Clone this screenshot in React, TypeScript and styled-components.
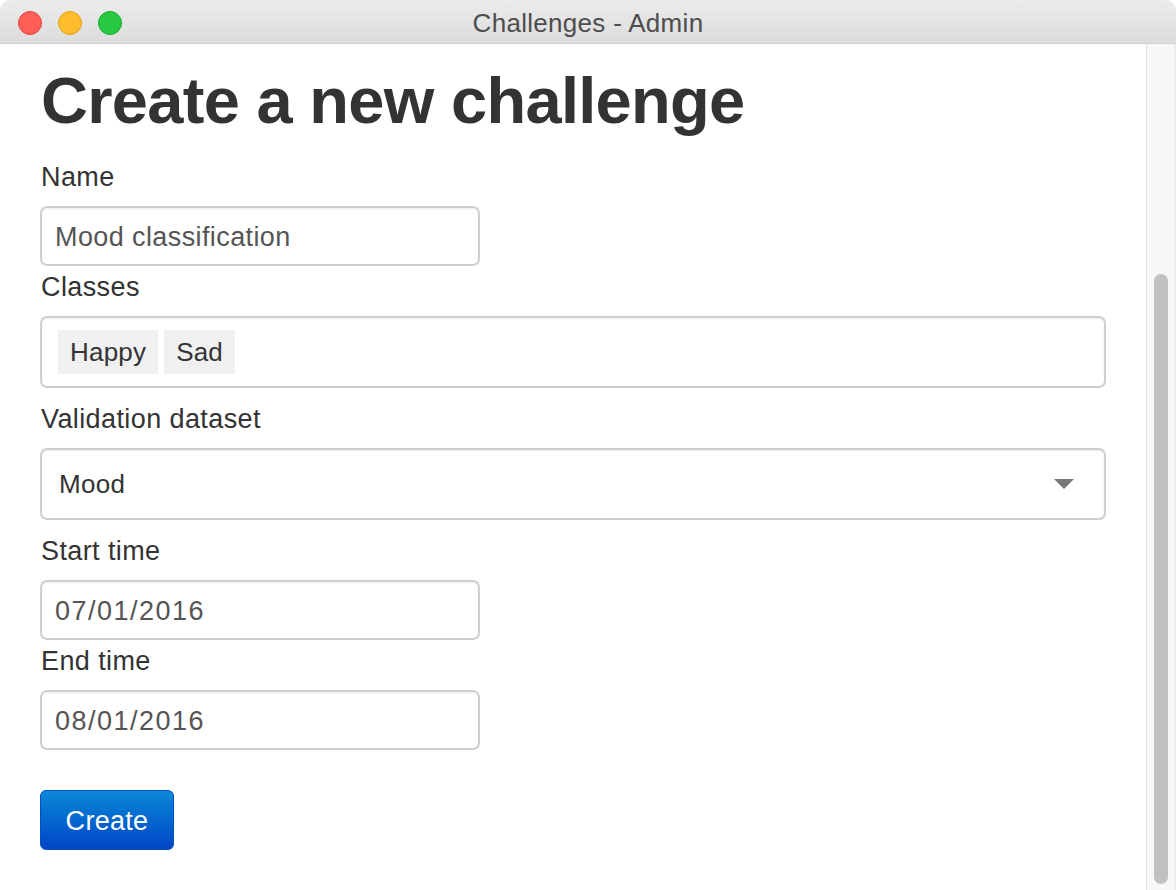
import React from "react";
import styled, { createGlobalStyle } from "styled-components";

const GlobalStyle = createGlobalStyle`
  html, body {
    margin: 0;
    padding: 0;
    background: #ffffff;
    overflow: hidden;
  }
  * { box-sizing: border-box; }
`;

const Window = styled.div`
  width: 1176px;
  height: 890px;
  display: flex;
  flex-direction: column;
  background: #ffffff;
  font-family: "Liberation Sans", Arial, sans-serif;
  overflow: hidden;
`;

const TitleBar = styled.div`
  position: relative;
  height: 44px;
  flex: 0 0 44px;
  display: flex;
  align-items: center;
  justify-content: center;
  background: linear-gradient(#ececec, #dcdcdc);
  border-bottom: 1px solid #d2d2d2;
  border-radius: 10px 10px 0 0;
`;

const Lights = styled.div`
  position: absolute;
  left: 18px;
  top: 11px;
  display: flex;
  gap: 16px;
`;

const Light = styled.span<{ $fill: string; $edge: string }>`
  width: 24px;
  height: 24px;
  border-radius: 50%;
  background: ${(p) => p.$fill};
  border: 1px solid ${(p) => p.$edge};
`;

const Title = styled.div`
  font-size: 26px;
  letter-spacing: 0.3px;
  color: #4d4d4d;
  line-height: 44px;
  padding-top: 2px;
`;

const Body = styled.div`
  flex: 1;
  display: flex;
  min-height: 0;
`;

const Content = styled.div`
  flex: 1;
  padding: 21px 40px 0 40px;
  display: flex;
  flex-direction: column;
  align-items: flex-start;
`;

const Heading = styled.h1`
  margin: 0 0 21px 1px;
  font-size: 65px;
  line-height: 72px;
  font-weight: 700;
  letter-spacing: -0.7px;
  color: #333333;
`;

const Field = styled.div<{ $gap: number; $wide?: boolean }>`
  display: flex;
  flex-direction: column;
  margin-bottom: ${(p) => p.$gap}px;
  width: ${(p) => (p.$wide ? "100%" : "440px")};
`;

const Label = styled.label`
  font-size: 27px;
  line-height: 36px;
  letter-spacing: 0.4px;
  color: #333333;
  padding-top: 1px;
  margin: 0 0 11px 1px;
`;

const TextInput = styled.input<{ $spacing?: number }>`
  height: 60px;
  width: 100%;
  padding: 3px 13px 0 13px;
  font-family: "Liberation Sans", Arial, sans-serif;
  font-size: 27px;
  letter-spacing: ${(p) => p.$spacing ?? 0.4}px;
  color: #555555;
  background: #ffffff;
  border: 2px solid #cfcfcf;
  border-radius: 7px;
  box-shadow: inset 0 1px 2px rgba(0, 0, 0, 0.08);
  outline: none;
`;

const TagBox = styled.div`
  height: 72px;
  width: 100%;
  display: flex;
  align-items: center;
  gap: 6px;
  padding: 0 16px;
  border: 2px solid #cfcfcf;
  border-radius: 7px;
  box-shadow: inset 0 1px 2px rgba(0, 0, 0, 0.08);
`;

const Tag = styled.span`
  height: 44px;
  display: flex;
  align-items: center;
  padding: 0 12px;
  background: #f0f0f0;
  font-size: 26px;
  letter-spacing: 0.2px;
  color: #333333;
`;

const SelectBox = styled.div`
  height: 72px;
  width: 100%;
  display: flex;
  align-items: center;
  justify-content: space-between;
  padding: 0 30px 0 17px;
  border: 2px solid #cfcfcf;
  border-radius: 7px;
  box-shadow: inset 0 1px 2px rgba(0, 0, 0, 0.08);
  font-size: 26px;
  letter-spacing: 0.3px;
  color: #333333;
`;

const Button = styled.button`
  margin-top: 38px;
  height: 60px;
  width: 134px;
  border: 1px solid #0050c4;
  border-radius: 6px;
  background: linear-gradient(#0a88d6, #0045c6);
  color: #ffffff;
  font-family: "Liberation Sans", Arial, sans-serif;
  font-size: 27px;
  letter-spacing: 0.3px;
  cursor: pointer;
  padding: 2px 0 0 0;
`;

const Track = styled.div`
  width: 30px;
  flex: 0 0 30px;
  display: flex;
  flex-direction: column;
  justify-content: flex-end;
  padding: 0 6px 6px 7px;
  background: #f7f7f7;
  border-left: 1px solid #e4e4e4;
  border-right: 2px solid #ececec;
`;

const Thumb = styled.div`
  height: 610px;
  width: 100%;
  border-radius: 8px;
  background: #c1c1c1;
`;

export default function App() {
  return (
    <>
      <GlobalStyle />
      <Window>
        <TitleBar>
          <Lights>
            <Light $fill="#ff5f57" $edge="#e2463f" />
            <Light $fill="#ffbd2e" $edge="#e1a116" />
            <Light $fill="#28c940" $edge="#14ae2a" />
          </Lights>
          <Title>Challenges - Admin</Title>
        </TitleBar>
        <Body>
          <Content>
            <Heading>Create a new challenge</Heading>
            <Field $gap={2}>
              <Label>Name</Label>
              <TextInput readOnly defaultValue="Mood classification" />
            </Field>
            <Field $gap={12} $wide>
              <Label>Classes</Label>
              <TagBox>
                <Tag>Happy</Tag>
                <Tag>Sad</Tag>
              </TagBox>
            </Field>
            <Field $gap={12} $wide>
              <Label>Validation dataset</Label>
              <SelectBox>
                <span>Mood</span>
                <svg width="20" height="10" viewBox="0 0 20 10">
                  <polygon points="0,0 20,0 10,10" fill="#777777" />
                </svg>
              </SelectBox>
            </Field>
            <Field $gap={2}>
              <Label>Start time</Label>
              <TextInput readOnly defaultValue="07/01/2016" $spacing={1.5} />
            </Field>
            <Field $gap={2}>
              <Label>End time</Label>
              <TextInput readOnly defaultValue="08/01/2016" $spacing={1.5} />
            </Field>
            <Button>Create</Button>
          </Content>
          <Track>
            <Thumb />
          </Track>
        </Body>
      </Window>
    </>
  );
}
